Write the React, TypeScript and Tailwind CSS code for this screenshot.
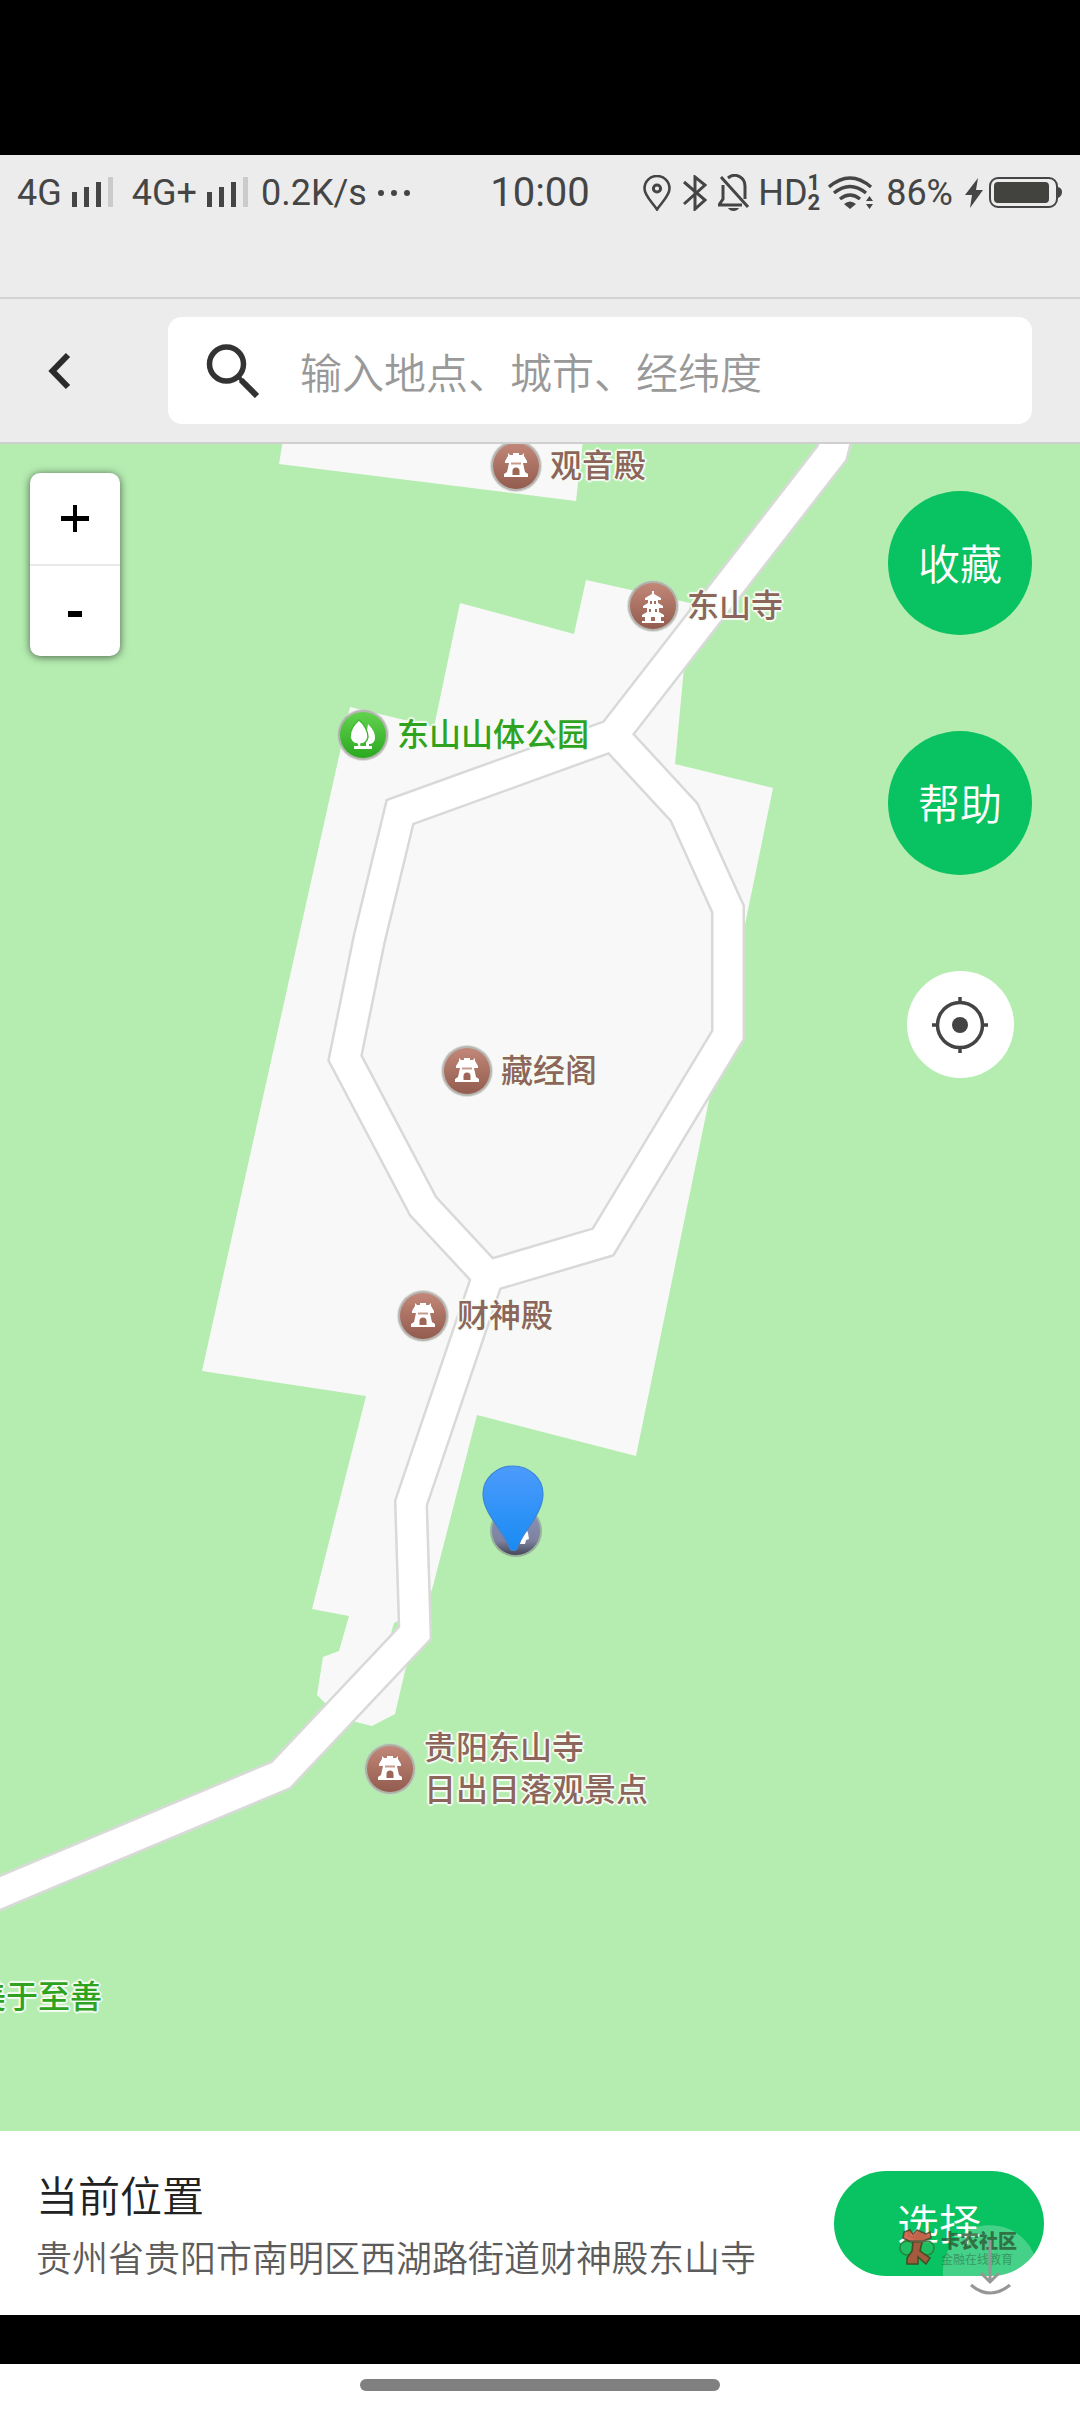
import React from "react";

type MarkerKind = "pavilion" | "pagoda" | "park";

type Place = {
  lines: string[];
  kind: MarkerKind;
  place: string;
};

const places: Place[] = [
  { lines: ["观音殿"], kind: "pavilion", place: "left-[490px] top-[-4px]" },
  { lines: ["东山寺"], kind: "pagoda", place: "left-[627px] top-[136px]" },
  { lines: ["东山山体公园"], kind: "park", place: "left-[337px] top-[265px]" },
  { lines: ["藏经阁"], kind: "pavilion", place: "left-[441px] top-[601px]" },
  { lines: ["财神殿"], kind: "pavilion", place: "left-[397px] top-[846px]" },
  { lines: ["贵阳东山寺", "日出日落观景点"], kind: "pavilion", place: "left-[364px] top-[1280px]" },
];

const halo =
  "[text-shadow:2px_0_1px_#f6fbf3,-2px_0_1px_#f6fbf3,0_2px_1px_#f6fbf3,0_-2px_1px_#f6fbf3,1px_1px_1px_#f6fbf3,-1px_-1px_1px_#f6fbf3,1px_-1px_1px_#f6fbf3,-1px_1px_1px_#f6fbf3]";

function Signal() {
  return (
    <svg className="h-8 w-[42px]" viewBox="0 0 42 32" aria-hidden="true">
      <path d="M0 15h5v15H0zM12 10h5v20h-5zM24 5h5v25h-5z" fill="#454545" />
      <path d="M36 0h5v30h-5z" fill="#cbcbcb" />
    </svg>
  );
}

function StatusBar() {
  return (
    <header className="h-36 border-b-2 border-[#d3d3d3] pt-[18px] font-[Roboto,sans-serif] text-[#454545]">
      <div className="grid h-10 grid-cols-[1fr_auto_1fr] items-center">
        <div className="flex items-center pl-[17px] text-[36px] leading-10">
          <span>4G</span>
          <span className="ml-[10px]"><Signal /></span>
          <span className="ml-[18px]">4G+</span>
          <span className="ml-[10px]"><Signal /></span>
          <span className="ml-[12px]">0.2K/s</span>
          <svg className="ml-[10px] h-2 w-9" viewBox="0 0 36 8" fill="#454545" aria-hidden="true">
            <circle cx="4" cy="4" r="3" />
            <circle cx="17" cy="4" r="3" />
            <circle cx="30" cy="4" r="3" />
          </svg>
        </div>
        <time className="text-[40px] leading-10">10:00</time>
        <div className="flex items-center justify-end pr-[18px]">
          <svg className="h-9 w-7" viewBox="0 0 28 36" fill="none" stroke="#454545" strokeWidth="2.6" aria-hidden="true">
            <path d="M14 34.5C10 28 1.5 21 1.5 13.5a12.5 12.5 0 0 1 25 0C26.500 21 18 28 14 34.500z" />
            <circle cx="14" cy="13.500" r="3.600" strokeWidth="3" />
          </svg>
          <svg className="ml-3 h-9 w-6" viewBox="0 0 24 36" fill="none" stroke="#454545" strokeWidth="3" aria-hidden="true">
            <path d="M1 7l21 18-10 9V2l10 8L1 29" />
          </svg>
          <svg className="ml-[11px] h-[38px] w-8" viewBox="0 0 32 38" fill="none" stroke="#454545" strokeWidth="3" aria-hidden="true">
            <path d="M3 3l27 30M5 11v14l-4 6h23M10 4c7-6 17-1 17 8v13" />
            <path d="M10 34h11c-2 4-9 4-11 0z" fill="#454545" stroke="none" />
          </svg>
          <span className="ml-2 text-[36px] leading-10">HD</span>
          <span className="flex flex-col text-[22px] font-bold leading-5">
            <span className="h-5">1</span>
            <span className="h-5">2</span>
          </span>
          <svg className="ml-2 h-[34px] w-[46px]" viewBox="0 0 46 34" fill="none" stroke="#454545" strokeWidth="3.400" aria-hidden="true">
            <path d="M1 11q21-18 42 0M6 17q16-13 32 0M12 23q10-8 20 0" />
            <path d="M16 28q6-5 12 0l-6 5z" fill="#454545" stroke="none" />
            <path d="M38 25l3.500-5 3.500 5zM38 28h7l-3.500 5z" fill="#454545" stroke="none" />
          </svg>
          <span className="ml-3 text-[36px] leading-10">86%</span>
          <svg className="ml-3 h-[30px] w-[18px]" viewBox="0 0 18 30" fill="#454545" aria-hidden="true">
            <path d="M13 0L0 17h7L5 30l13-18h-7z" />
          </svg>
          <svg className="ml-1.5 h-8 w-[73px]" viewBox="0 0 73 32" aria-hidden="true">
            <rect x="1" y="1" width="67" height="29" rx="8" fill="none" stroke="#454545" strokeWidth="2" />
            <rect x="5" y="5" width="55" height="21" rx="4" fill="#42423e" />
            <path d="M69 10q4 1 4 5t-4 6z" fill="#454545" />
          </svg>
        </div>
      </div>
    </header>
  );
}

function SearchBar() {
  return (
    <div className="flex items-center border-b-2 border-[#cfcfcf] py-[18px]">
      <button type="button" aria-label="返回" className="w-[168px] pl-12">
        <svg className="h-10 w-6" viewBox="0 0 24 40" fill="none" stroke="#2b2b2b" strokeWidth="6" aria-hidden="true">
          <path d="M20 4L4.500 20 20 36" />
        </svg>
      </button>
      <label className="mr-12 flex h-[107px] flex-1 items-center rounded-[14px] bg-white pl-[38px]">
        <svg className="h-[54px] w-[54px] shrink-0" viewBox="0 0 54 54" fill="none" stroke="#333" aria-hidden="true">
          <circle cx="20.500" cy="20" r="17" strokeWidth="5.500" />
          <path d="M35 36L51 52" strokeWidth="6" />
          <path d="M32 32l5 6" strokeWidth="4" />
        </svg>
        <input
          type="text"
          aria-label="搜索地点"
          placeholder="输入地点、城市、经纬度"
          className="ml-10 h-16 min-w-0 flex-1 bg-transparent text-[42px] font-[350] text-[#333] outline-none placeholder:text-[#999]"
        />
      </label>
    </div>
  );
}

function MapCanvas() {
  const roads = (
    <>
      <path d="M845 400L832 453L613 735L684 812L728 909V1035L603 1242L488 1276L423 1206L345 1058L369 940L400 812L613 735" />
      <path d="M488 1276L411 1503L415 1633L281 1775L0 1893L-50 1914" />
    </>
  );
  return (
    <svg
      className="absolute inset-0 h-full w-full"
      viewBox="0 444 1080 1687"
      preserveAspectRatio="xMinYMin slice"
      aria-hidden="true"
    >
      <g fill="#f8f8f8">
        <path d="M283 440L279 464L576 501L583 440z" />
        <path d="M460 603L574 634L586 580L690 603L675 764L773 788L636 1456L477 1415L433 1586L405 1671L395 1714L372 1726L340 1718L317 1695L323 1657L339 1651L349 1616L312 1609L366 1396L202 1371L298 940L350 707L434 727z" />
      </g>
      <path d="M394 1623L400 1620V1632L389 1640z" fill="#b5edb1" />
      <g fill="none" strokeMiterlimit="10">
        <g stroke="#d8dad7" strokeWidth="34">{roads}</g>
        <g stroke="#fff" strokeWidth="29">{roads}</g>
      </g>
    </svg>
  );
}

function MarkerIcon({ kind }: { kind: MarkerKind }) {
  const park = kind === "park";
  const gradientId = React.useId();
  return (
    <svg className="h-[52px] w-[52px] shrink-0" viewBox="-26 -26 52 52" aria-hidden="true">
      <defs>
        <linearGradient id={gradientId} x1="0" y1="0" x2="0" y2="1">
          <stop offset="0" stopColor={park ? "#62d24f" : "#c28778"} />
          <stop offset="1" stopColor={park ? "#2aa91f" : "#925c4e"} />
        </linearGradient>
      </defs>
      <circle r="26" fill="#c9cdc7" opacity="0.6" />
      <circle r="25" fill="#9c9a96" opacity="0.6" />
      <circle r="23" fill={`url(#${gradientId})`} />
      {kind === "pavilion" && (
        <g>
          <path d="M-8-13l2 2h3v-2h6v2h3l2-2v3l3 5v2h-22v-2l3-5z" fill="#fff" />
          <path d="M-7-3H7l2 9 3 2v3h-24V8l3-2z" fill="#fff" />
          <path d="M-5-3.500H5v2H-5z" fill="#c89a8e" />
          <path d="M-3.500 9V5a3.500 3.500 0 0 1 7 0v4z" fill="#9d6657" />
        </g>
      )}
      {kind === "pagoda" && (
        <g fill="#fff">
          <path d="M-1-15h2v3l7 4v2H5v3l5 3v2H6v4l5 3v2H8v4h3v2h-22v-2h3v-4h-3v-2l5-3V2h-4V0l5-3v-3h-3v-2l7-4z" />
          <path d="M-3-5h2v3h-2zM1-5h2v3H1zM-4 3h2v3h-2zM2 3h2v3H2zM-2 15v-4h4v4z" fill="#a26b5d" />
        </g>
      )}
      {park && (
        <g>
          <path d="M5-11q8 8 7 15-1 5-6 5v3h-3V2z" fill="#fff" />
          <path d="M-4-15C-10-10-13-4-13 2q1 6 7 7l1 3h3V9q6-1 7-7C5-4 1-11-4-15z" fill="#fff" stroke="#3fba31" strokeWidth="1.500" />
          <path d="M-9 11H9v3H-9z" fill="#fff" />
        </g>
      )}
    </svg>
  );
}

function PlaceMarker({ lines, kind, place }: Place) {
  return (
    <div className={`absolute flex items-center gap-2 ${place}`}>
      <MarkerIcon kind={kind} />
      <div
        className={`whitespace-nowrap pb-1.5 text-[32px] font-medium leading-[42px] ${halo} ${
          kind === "park" ? "text-[#2fa31f]" : "text-[#8c655b]"
        }`}
      >
        {lines.map((line) => (
          <p key={line}>{line}</p>
        ))}
      </div>
    </div>
  );
}

function LocationPin() {
  return (
    <svg className="absolute left-[481px] top-[1021px] h-[94px] w-[64px]" viewBox="0 0 64 94" role="img" aria-label="当前位置标记">
      <defs>
        <linearGradient id="pin-fill" x1="0" y1="0" x2="0" y2="1">
          <stop offset="0" stopColor="#4d9bfc" />
          <stop offset="1" stopColor="#188bf3" />
        </linearGradient>
        <linearGradient id="pin-base" x1="0" y1="0" x2="0" y2="1">
          <stop offset="0" stopColor="#8b93bd" />
          <stop offset="0.700" stopColor="#7d829f" />
          <stop offset="1" stopColor="#454858" />
        </linearGradient>
      </defs>
      <circle cx="35" cy="66" r="26" fill="#8d9a92" opacity="0.700" />
      <circle cx="35" cy="66" r="24" fill="url(#pin-base)" />
      <path d="M45 63l2 5 1 6-3 1-1 4h-5l2-8z" fill="#fff" />
      <path d="M29 84C26 69 2 50 2 29a30 28 0 0 1 60 0C62 50 39 69 36 84q-3.500 3-7 0z" fill="url(#pin-fill)" stroke="#3b86d8" strokeWidth="1.200" />
    </svg>
  );
}

function MapView() {
  return (
    <main className="relative min-h-[1200px] flex-1 overflow-hidden bg-[#b5edb1]">
      <MapCanvas />
      {places.map((item) => (
        <PlaceMarker key={item.lines[0]} {...item} />
      ))}
      <p className={`absolute left-[-26px] top-[1529px] whitespace-nowrap text-[32px] font-medium leading-[42px] text-[#2fa31f] ${halo}`}>
        美于至善
      </p>
      <LocationPin />

      <div className="absolute left-[30px] top-[29px] flex w-[90px] flex-col overflow-hidden rounded-[10px] bg-white shadow-[0_1px_8px_rgba(0,0,0,0.6)]">
        <button type="button" aria-label="放大" className="flex h-[93px] items-center justify-center border-b-2 border-[#e9e9e9]">
          <svg className="h-7 w-7" viewBox="0 0 28 28" aria-hidden="true">
            <path d="M12 0h4v11h12v5H16v11h-4V16H0v-5h12z" />
          </svg>
        </button>
        <button type="button" aria-label="缩小" className="flex h-[90px] items-center justify-center">
          <svg className="h-3 w-4" viewBox="0 0 16 12" aria-hidden="true">
            <path d="M1 6h14v6H1z" />
          </svg>
        </button>
      </div>

      <div className="absolute right-12 top-[47px] flex flex-col items-center gap-24 text-[42px] font-[350] text-white">
        <button type="button" className="h-36 w-36 rounded-full bg-[#09c261] pb-1">收藏</button>
        <button type="button" className="h-36 w-36 rounded-full bg-[#09c261] pb-1">帮助</button>
        <button type="button" aria-label="定位" className="flex h-[107px] w-[107px] items-center justify-center rounded-full bg-white">
          <svg className="h-14 w-14" viewBox="0 0 56 56" fill="none" stroke="#444" strokeWidth="3.500" aria-hidden="true">
            <circle cx="28" cy="28" r="22.500" />
            <circle cx="28" cy="28" r="8" fill="#444" stroke="none" />
            <path d="M28 0v7M28 49v7M0 28h7M49 28h7" />
          </svg>
        </button>
      </div>
    </main>
  );
}

function Watermark() {
  return (
    <div className="pointer-events-none absolute left-[65px] top-[58px] flex w-[120px] items-start gap-1.5 text-[#2c5a35]">
      <svg className="h-9 w-9 shrink-0 opacity-90" viewBox="0 0 36 36" aria-hidden="true">
        <circle cx="8" cy="19" r="7" fill="#22be62" stroke="#2f7a41" strokeWidth="1.500" />
        <circle cx="28" cy="19" r="7" fill="#22be62" stroke="#2f7a41" strokeWidth="1.500" />
        <path d="M5 3l6-2 3 4 4-4 9 4 4-2 1 6-8 3H10L4 9z" fill="#d65a49" stroke="#544a2b" strokeWidth="1.500" />
        <path d="M14 13h9l-2 9 10 7-4 6-8-7v7H8v-6l5-7z" fill="#b3503a" stroke="#47401f" strokeWidth="1.500" />
      </svg>
      <div className="whitespace-nowrap opacity-80">
        <p className="text-[19px] font-black leading-[22px]">卡农社区</p>
        <p className="text-[12px] leading-4 opacity-60">金融在线教育</p>
      </div>
    </div>
  );
}

function LocationPanel() {
  return (
    <section className="flex h-[184px] items-center justify-between bg-white pl-9 pr-9">
      <div className="min-w-0 pt-1">
        <h1 className="text-[42px] font-[350] leading-[62px] text-[#222]">当前位置</h1>
        <p className="text-[36px] font-[350] leading-[62px] text-[#5c5c5c]">贵州省贵阳市南明区西湖路街道财神殿东山寺</p>
      </div>
      <div className="relative shrink-0">
        <button type="button" className="h-[105px] w-[210px] rounded-full bg-[#09c261] pb-1 text-[42px] font-[350] text-white">
          选择
        </button>
        <svg className="pointer-events-none absolute left-[108px] top-[52px] h-[76px] w-24" viewBox="0 0 96 76" aria-hidden="true">
          <path d="M1 53V46a47 45 0 0 1 93-8Q82 53 52 53z" fill="#fff" fillOpacity="0.250" />
        </svg>
        <Watermark />
        <svg className="pointer-events-none absolute left-[108px] top-[50px] h-[76px] w-24" viewBox="0 0 96 76" fill="none" stroke="#969696" strokeWidth="3" aria-hidden="true">
          <path d="M48 19v42M39 52l9 9 9-9M29 64q19 16 39 0" />
        </svg>
      </div>
    </section>
  );
}

export default function App() {
  return (
    <div className="flex min-h-screen flex-col bg-[#ececec] font-['Noto_Sans_CJK_SC',sans-serif]">
      <div className="h-[155px] bg-black" />
      <StatusBar />
      <SearchBar />
      <MapView />
      <LocationPanel />
      <div className="h-[49px] bg-black" />
      <footer className="flex h-12 items-center justify-center bg-white">
        <div className="mb-1.5 h-3 w-1/3 rounded-full bg-[#808080]" />
      </footer>
    </div>
  );
}
